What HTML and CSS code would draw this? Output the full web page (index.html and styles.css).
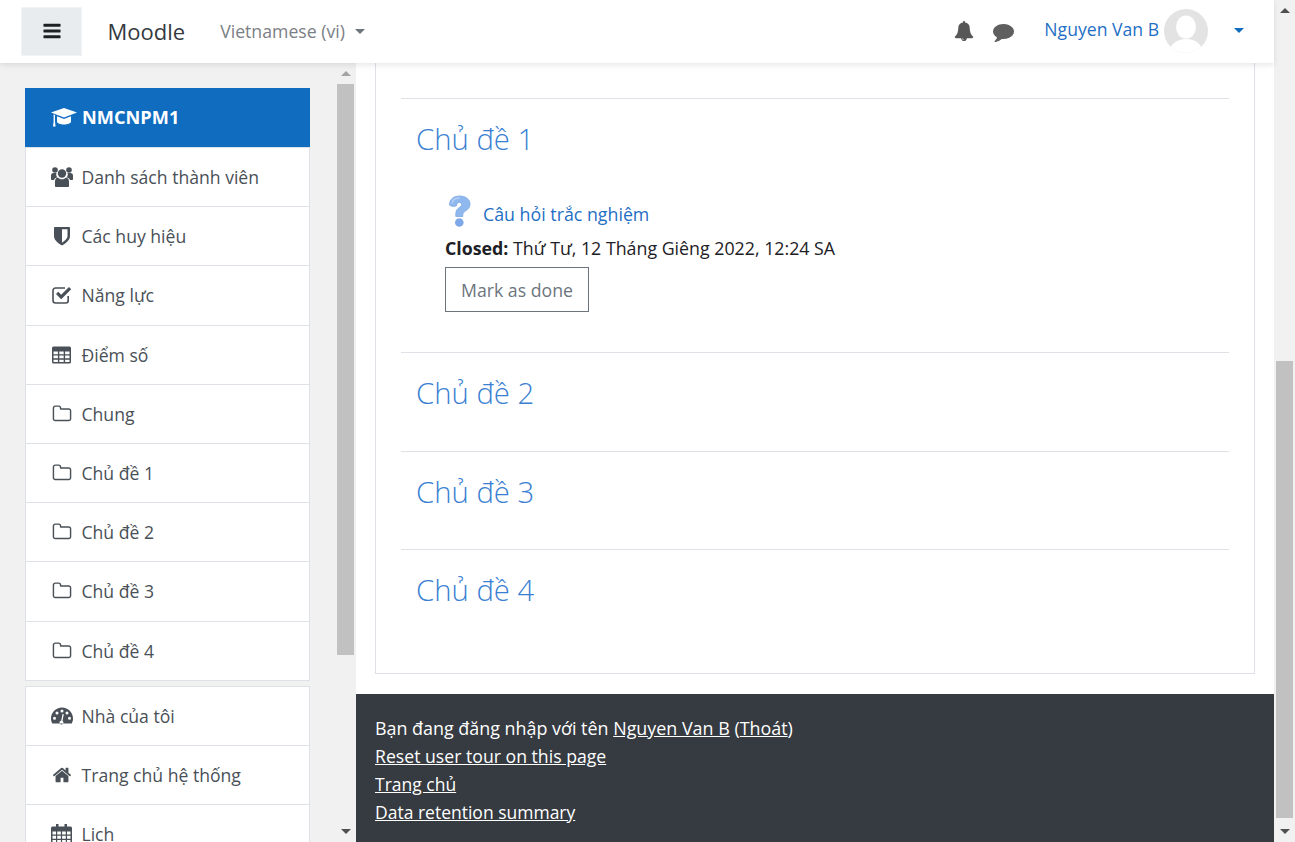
FILE: index.html
```html
<!DOCTYPE html>
<html lang="vi">
<head>
<meta charset="utf-8">
<title>NMCNPM1</title>
<link rel="stylesheet" href="styles.css">
</head>
<body>
<div class="app">
  <div class="viewport">
    <header class="navbar">
      <button class="burger"><svg class="ic20" viewBox="0 0 1792 1792"><path d="M1664 1344v128q0 26-19 45t-45 19h-1408q-26 0-45-19t-19-45v-128q0-26 19-45t45-19h1408q26 0 45 19t19 45zm0-512v128q0 26-19 45t-45 19h-1408q-26 0-45-19t-19-45v-128q0-26 19-45t45-19h1408q26 0 45 19t19 45zm0-512v128q0 26-19 45t-45 19h-1408q-26 0-45-19t-19-45v-128q0-26 19-45t45-19h1408q26 0 45 19t19 45z"/></svg></button>
      <span class="brand">Moodle</span>
      <span class="lang">Vietnamese (vi)</span><span class="caret"></span>
      <div class="spacer"></div>
      <svg class="bell" viewBox="0 0 1792 1792"><path d="M912 1696q0-16-16-16-59 0-101.5-42.5t-42.5-101.5q0-16-16-16t-16 16q0 73 51.5 124.5t124.5 51.5q16 0 16-16zm816-288q0 52-38 90t-90 38h-448q0 106-75 181t-181 75-181-75-75-181h-448q-52 0-90-38t-38-90q50-42 91-88t85-119.5 74.5-158.5 50-206 19.5-260q0-152 117-282.5t307-158.5q-8-19-8-39 0-40 28-68t68-28 68 28 28 68q0 20-8 39 190 28 307 158.5t117 282.5q0 139 19.5 260t50 206 74.5 158.5 85 119.5 91 88z"/></svg>
      <svg class="comment" viewBox="0 0 1792 1792"><path d="M1792 896q0 174-120 321.5t-326 233-450 85.5q-70 0-145-8-198 175-460 242-49 14-114 22-17 2-30.5-9t-17.5-29v-1q-3-4-.5-12t2-10 4.5-9.5l6-9 7-8.5 8-9q7-8 31-34.5t34.5-38 31-39.5 32.5-51 27-59 26-76q-157-89-247.5-220t-90.5-281q0-130 71-248.5t191-204.5 286-136.5 348-50.5q244 0 450 85.5t326 233 120 321.5z"/></svg>
      <span class="username">Nguyen Van B</span>
      <svg class="avatar" viewBox="0 0 44 44"><defs><clipPath id="av"><circle cx="22" cy="22" r="22"/></clipPath></defs><circle cx="22" cy="22" r="22" fill="#e3e3e3"/><g clip-path="url(#av)" fill="#fff"><ellipse cx="22" cy="18" rx="10" ry="11.500"/><ellipse cx="22" cy="44" rx="17" ry="14"/></g></svg>
      <span class="caret blue"></span>
    </header>
    <div class="body">
      <aside class="sidebar">
        <nav class="drawer">
          <div class="group">
            <a class="item active"><svg class="cap" viewBox="0 0 26 19"><path d="M13 0 0 4.500l13 5 13-5z"/><path d="M6 8.300v5.200c0 2 3.500 3 7 3s7-1 7-3V8.300l-7 2.700z"/><path d="M2.600 6.300v7.200L2 18.500h2.600L4 13.500V6.900z"/></svg><b>NMCNPM1</b></a>
            <a class="item"><svg class="ic" viewBox="0 0 22 20"><circle cx="11" cy="6.500" r="4.200"/><circle cx="4" cy="3" r="2.800"/><circle cx="18" cy="3" r="2.800"/><path d="M5 20c-.7 0-1-.5-1-1v-4.500C4 12 5.500 10.500 7 10.500c1 1.200 2.400 1.800 4 1.800s3-.6 4-1.800c1.500 0 3 1.500 3 4V19c0 .5-.3 1-1 1z"/><path d="M0 12V8.500C0 7 1 6 2.500 6h3c-.2.600-.3 1-.3 1.500 0 1 .4 2 1 2.800C4.500 10.800 3.500 11.500 3 13H1c-.6 0-1-.4-1-1zM22 12V8.500C22 7 21 6 19.500 6h-3c.2.600.3 1 .3 1.500 0 1-.4 2-1 2.800 1.700.5 2.700 1.200 3.200 2.700h2c.6 0 1-.4 1-1z"/></svg>Danh sách thành viên</a>
            <a class="item"><svg class="ic" viewBox="0 0 22 20"><path fill-rule="evenodd" d="M4 1h14c.5 0 1 .4 1 1v8c0 4.500-5 7.800-8 9.500C8 17.800 3 14.500 3 10V2c0-.6.500-1 1-1zM11 3.200v13.600c2.500-1.700 5.500-4.300 5.500-6.800V3.200z"/></svg>Các huy hiệu</a>
            <a class="item"><svg class="ic" viewBox="0 0 22 20"><path fill="none" stroke="currentColor" stroke-width="1.600" d="M17.200 11v4.500a2.500 2.500 0 0 1-2.500 2.500H4.500A2.500 2.500 0 0 1 2 15.500v-10A2.500 2.500 0 0 1 4.500 3h9.500"/><path d="m5 9 2.200-2.200 3 3L18 2l2.200 2.200-10 10z"/></svg>Năng lực</a>
            <a class="item"><svg class="ic" viewBox="0 0 22 20"><path fill-rule="evenodd" d="M2.500 1.500h16A1.500 1.500 0 0 1 20 3v14a1.500 1.500 0 0 1-1.500 1.500h-16A1.500 1.500 0 0 1 1 17V3a1.500 1.500 0 0 1 1.500-1.500zM2.500 6.500v2.700h4.400V6.500zm5.800 0v2.700h4.400V6.500zm5.800 0v2.700h4.400V6.500zM2.500 10.600v2.700h4.400v-2.700zm5.800 0v2.700h4.400v-2.700zm5.800 0v2.700h4.400v-2.700zM2.500 14.700V17h4.400v-2.300zm5.800 0V17h4.400v-2.300zm5.800 0V17h4.400v-2.300z"/></svg>Điểm số</a>
            <a class="item"><svg class="ic" viewBox="0 0 1792 1792"><path d="M1600 1312v-704q0-40-28-68t-68-28h-704q-40 0-68-28t-28-68v-64q0-40-28-68t-68-28h-320q-40 0-68 28t-28 68v960q0 40 28 68t68 28h1216q40 0 68-28t28-68zm128-704v704q0 92-66 158t-158 66h-1216q-92 0-158-66t-66-158v-960q0-92 66-158t158-66h320q92 0 158 66t66 158v32h672q92 0 158 66t66 158z"/></svg>Chung</a>
            <a class="item"><svg class="ic" viewBox="0 0 1792 1792"><path d="M1600 1312v-704q0-40-28-68t-68-28h-704q-40 0-68-28t-28-68v-64q0-40-28-68t-68-28h-320q-40 0-68 28t-28 68v960q0 40 28 68t68 28h1216q40 0 68-28t28-68zm128-704v704q0 92-66 158t-158 66h-1216q-92 0-158-66t-66-158v-960q0-92 66-158t158-66h320q92 0 158 66t66 158v32h672q92 0 158 66t66 158z"/></svg>Chủ đề 1</a>
            <a class="item"><svg class="ic" viewBox="0 0 1792 1792"><path d="M1600 1312v-704q0-40-28-68t-68-28h-704q-40 0-68-28t-28-68v-64q0-40-28-68t-68-28h-320q-40 0-68 28t-28 68v960q0 40 28 68t68 28h1216q40 0 68-28t28-68zm128-704v704q0 92-66 158t-158 66h-1216q-92 0-158-66t-66-158v-960q0-92 66-158t158-66h320q92 0 158 66t66 158v32h672q92 0 158 66t66 158z"/></svg>Chủ đề 2</a>
            <a class="item"><svg class="ic" viewBox="0 0 1792 1792"><path d="M1600 1312v-704q0-40-28-68t-68-28h-704q-40 0-68-28t-28-68v-64q0-40-28-68t-68-28h-320q-40 0-68 28t-28 68v960q0 40 28 68t68 28h1216q40 0 68-28t28-68zm128-704v704q0 92-66 158t-158 66h-1216q-92 0-158-66t-66-158v-960q0-92 66-158t158-66h320q92 0 158 66t66 158v32h672q92 0 158 66t66 158z"/></svg>Chủ đề 3</a>
            <a class="item"><svg class="ic" viewBox="0 0 1792 1792"><path d="M1600 1312v-704q0-40-28-68t-68-28h-704q-40 0-68-28t-28-68v-64q0-40-28-68t-68-28h-320q-40 0-68 28t-28 68v960q0 40 28 68t68 28h1216q40 0 68-28t28-68zm128-704v704q0 92-66 158t-158 66h-1216q-92 0-158-66t-66-158v-960q0-92 66-158t158-66h320q92 0 158 66t66 158v32h672q92 0 158 66t66 158z"/></svg>Chủ đề 4</a>
          </div>
          <div class="group">
            <a class="item"><svg class="ic" viewBox="0 0 22 20"><path fill-rule="evenodd" d="M11 1.500C4.800 1.500 0 6.500 0 12.500c0 2 .5 3.500 1.300 5h19.400c.8-1.500 1.300-3 1.300-5 0-6-4.800-11-11-11zM3.500 13.800a1.500 1.500 0 1 1 0-3 1.500 1.500 0 0 1 0 3zM6 8.500a1.500 1.500 0 1 1 0-3 1.500 1.500 0 0 1 0 3zM11 6.500a1.500 1.500 0 1 1 0-3 1.500 1.500 0 0 1 0 3zm-.8 8.300L11.500 8l1.300.3-1.300 6.800a1.800 1.800 0 1 1-1.300-.3zM16 8.500a1.500 1.500 0 1 1 0-3 1.500 1.500 0 0 1 0 3zM18.500 13.800a1.500 1.500 0 1 1 0-3 1.500 1.500 0 0 1 0 3z"/></svg>Nhà của tôi</a>
            <a class="item"><svg class="ic" viewBox="0 0 1792 1792"><path d="M1472 992v480q0 26-19 45t-45 19h-384v-384h-256v384h-384q-26 0-45-19t-19-45v-480q0-1 .5-3t.5-3l575-474 575 474q1 2 1 6zm223-69l-62 74q-8 9-21 11h-3q-13 0-21-7l-692-577-692 577q-12 8-24 7-13-2-21-11l-62-74q-8-10-7-23.5t11-21.5l719-599q32-26 76-26t76 26l244 204v-195q0-14 9-23t23-9h192q14 0 23 9t9 23v408l219 182q10 8 11 21.5t-7 23.5z"/></svg>Trang chủ hệ thống</a>
            <a class="item"><svg class="ic" viewBox="0 0 22 20"><path fill-rule="evenodd" d="M5 0h2.500v2.500h6V0H16v2.500h3.500A1.500 1.500 0 0 1 21 4v14.500a1.500 1.500 0 0 1-1.500 1.500h-18A1.500 1.500 0 0 1 0 18.500V4a1.500 1.500 0 0 1 1.500-1.500H5zM1.500 7.500v3h3.500v-3zm4.700 0v3h3.700v-3zm4.900 0v3h3.700v-3zm4.900 0v3h3.500v-3zM1.500 11.700v3h3.500v-3zm4.700 0v3h3.700v-3zm4.900 0v3h3.700v-3zm4.900 0v3h3.500v-3zM1.500 15.900v2.600h3.500v-2.600zm4.700 0v2.600h3.700v-2.600zm4.900 0v2.600h3.700v-2.600zm4.900 0v2.600h3.500v-2.600z"/></svg>Lịch</a>
          </div>
        </nav>
        <div class="sbar">
          <span class="arrow up dim"></span>
          <div class="thumb t-side"></div>
          <div class="spacer"></div>
          <span class="arrow down"></span>
        </div>
      </aside>
      <div class="main">
        <section class="card">
          <div class="topic s1">
            <h3>Chủ đề 1</h3>
            <div class="activity">
              <svg class="quiz" viewBox="0 0 24 32"><path d="M2.500 10C2.500 4 7 1 12.500 1c6 0 10.500 3.300 10.500 8 0 3.700-2.300 5.500-4.500 7-1.700 1.200-2.700 2.200-2.700 3.800V21.500H8.800v-2.800c0-3.500 1.800-5 3.500-6.200 1.300-1 2.300-1.700 2.300-3 0-1.300-1-2-2.300-2-1.700 0-2.600 1.100-2.800 3.300-2.500 1.200-6.500.5-6.500-.8z" fill="#8fb8ee" stroke="#7ea6e6" stroke-width=".8"/><path d="M5 8.500C5.500 5 8.500 3 12.500 3" fill="none" stroke="#b5d0f5" stroke-width="1.500"/><circle cx="12.300" cy="27.500" r="4.300" fill="#7fa8ea"/></svg>
              <a class="link">Câu hỏi trắc nghiệm</a>
            </div>
            <p class="closed"><b>Closed:</b> Thứ Tư, 12 Tháng Giêng 2022, 12:24 SA</p>
            <button class="done">Mark as done</button>
          </div>
          <div class="topic s2"><h3>Chủ đề 2</h3></div>
          <div class="topic s3"><h3>Chủ đề 3</h3></div>
          <div class="topic s4"><h3>Chủ đề 4</h3></div>
        </section>
        <footer class="footer">
          <div class="f-login">Bạn đang đăng nhập với tên <a>Nguyen Van B</a> (<a>Thoát</a>)</div>
          <div class="f-tour"><a>Reset user tour on this page</a></div>
          <div><a>Trang chủ</a></div>
          <div><a>Data retention summary</a></div>
        </footer>
      </div>
    </div>
  </div>
  <div class="sbar page">
    <span class="arrow up"></span>
    <div class="gap g-page-top"></div>
    <div class="thumb t-page"></div>
    <div class="spacer"></div>
    <span class="arrow down"></span>
  </div>
</div>
</body>
</html>
```

FILE: styles.css
```css
* { box-sizing: border-box; }
html, body { margin: 0; height: 100%; overflow: hidden; }
body { font-family: "Open Sans", "Noto Sans", sans-serif; font-size: 17.600px; color: #1d2125; background: #f2f2f2; }
.app { display: flex; height: 842px; }
.viewport { flex: 1; min-width: 0; display: flex; flex-direction: column; }
.spacer { flex: 1; }

.navbar { position: relative; z-index: 2; flex: 0 0 63px; display: flex; align-items: center; background: #fff; box-shadow: 0 2px 6px rgba(0,0,0,.1); padding-left: 21px; }
.burger { width: 61px; height: 49px; padding: 0; border: 1px solid #f1f3f5; background: #e9ecef; display: flex; align-items: center; justify-content: center; margin-top: -1px; }
.ic20 { width: 20px; height: 20px; fill: #1d2125; }
.brand { margin-left: 25.500px; margin-top: -2px; font-size: 22px; color: #343a40; }
.lang { margin-left: 35px; color: #7b8086; font-size: 17.700px; margin-top: -1px; }
.caret { margin-left: 10px; border-style: solid; border-width: 5.500px 5.500px 0; border-color: #6f7479 transparent transparent; }
.caret.blue { margin: -3px 30px 0 26px; border-top-color: #0f6cbf; }
.bell { width: 20px; height: 20px; fill: #575757; margin-top: -1px; }
.comment { width: 21px; height: 21px; fill: #5f5f5f; margin-left: 19px; }
.username { margin-left: 30px; color: #1f6fc4; font-size: 17.600px; margin-top: -5px; }
.avatar { width: 44px; height: 44px; margin-left: 5px; margin-top: -2px; }

.body { flex: 1; min-height: 0; display: flex; }
.sidebar { flex: 0 0 356px; display: flex; background: #f1f1f1; min-height: 0; }
.drawer { flex: 1; min-width: 0; padding: 25px 25px 0; overflow: hidden; display: flex; flex-direction: column; gap: 5px; }
.group { flex: none; background: #fff; border: 1px solid #dee2e6; border-width: 0 1px 1px; }
.group + .group { border-top-width: 1px; }
.item { display: flex; align-items: center; height: 59.200px; padding-left: 24.500px; color: #495057; border-top: 1px solid #dee2e6; line-height: 24px; }
.group + .group .item:first-child { border-top: 0; height: 58.400px; }
.item.active { background: #0f6cbf; color: #fff; border-top: 0; margin: 0 -1px; padding-left: 26px; height: 59px; padding-bottom: 1px; }
.item b { font-weight: 700; font-size: 18.200px; }
.ic { width: 22px; height: 20px; fill: currentColor; flex: none; margin-right: 9px; }
.cap { width: 26px; height: 19px; fill: currentColor; flex: none; margin-right: 5px; }

.sbar { flex: 0 0 21px; display: flex; flex-direction: column; align-items: center; background: #f1f1f1; padding: 0 2px; }
.thumb { flex: none; width: 17px; background: #c1c1c1; }
.t-side { height: 571px; }
.t-page { height: 457px; }
.g-page-top { height: 340px; }
.arrow { flex: none; height: 21px; width: 17px; display: flex; align-items: center; justify-content: center; }
.arrow::before { content: ""; border-style: solid; border-color: transparent; }
.arrow.up::before { border-width: 0 5px 5px; border-bottom-color: #505050; }
.arrow.down::before { border-width: 5px 5px 0; border-top-color: #505050; }
.arrow.up.dim::before { border-bottom-color: #a3a3a3; }

.main { flex: 1; min-width: 0; display: flex; flex-direction: column; background: #fff; }
.card { margin: 0 19px 20px; padding: 35px 25px 0; height: 611px; border: 1px solid #dee2e6; border-top: 0; font-size: 17.800px; }
.topic { border-top: 1px solid #dee2e6; padding: 20px 15px 0; }
.s1 { height: 254px; }
.s2 { height: 99px; }
.s3 { height: 98px; }
h3 { margin: 0; font-size: 29.300px; font-weight: 300; line-height: 41px; color: #3a7fd2; }
.activity { display: flex; align-items: flex-end; margin: 35px 0 0 31px; height: 32px; }
.quiz { width: 24px; height: 32px; flex: none; }
.link { margin: 0 0 1px 12px; color: #1f6fc4; line-height: 24px; }
.closed { margin: 9px 0 0 29px; line-height: 24px; }
.closed b { font-weight: 700; }
.done { display: block; margin: 7px 0 0 29px; width: 144px; height: 45px; padding: 0; background: #fff; border: 1px solid #6c757d; color: #6c757d; font: inherit; font-size: 17.700px; }
.footer { flex: 1; background: #363a41; color: #fff; padding: 20px 19px 0; line-height: 28px; font-size: 17.500px; }
.f-login { font-size: 17.900px; }
.f-tour { font-size: 17.670px; }
.footer a { text-decoration: underline; }
```
